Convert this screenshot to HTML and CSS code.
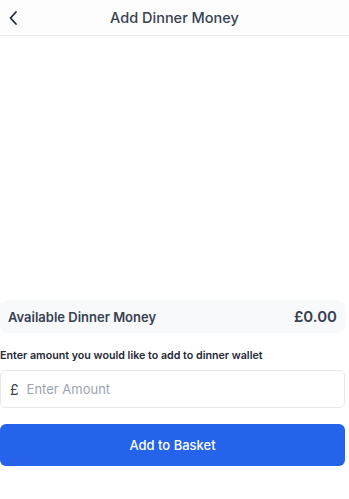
FILE: index.html
```html
<!DOCTYPE html>
<html>
<head>
<meta charset="utf-8">
<link rel="stylesheet" href="styles.css">
</head>
<body>
<div class="page">
  <header class="topbar">
    <button class="back" aria-label="Back">
      <svg width="10" height="16" viewBox="0 0 10 16"><path d="M8 2 L2.5 8 L8 14" fill="none" stroke="#1f2937" stroke-width="1.8" stroke-linecap="round" stroke-linejoin="round"/></svg>
    </button>
    <h1 class="title">Add Dinner Money</h1>
  </header>
  <main class="content">
    <div class="spacer"></div>
    <div class="balance">
      <span class="balance-label">Available Dinner Money</span>
      <span class="balance-value">£0.00</span>
    </div>
    <label class="field-label" for="amt">Enter amount you would like to add to dinner wallet</label>
    <div class="input-wrap">
      <span class="currency">£</span>
      <input id="amt" class="amount" type="text" placeholder="Enter Amount">
    </div>
    <button class="submit">Add to Basket</button>
  </main>
</div>
</body>
</html>
```
FILE: styles.css
```css
* { box-sizing: border-box; }
html, body { margin: 0; padding: 0; background: #ffffff; }
body { font-family: Inter, "Noto Sans", sans-serif; color: #374151; }
.page { width: 349px; height: 499px; }
.topbar {
  height: 36px;
  border-bottom: 1px solid #eceef1;
  background: #fdfdfd;
  display: flex;
  align-items: center;
  justify-content: center;
  position: relative;
}
.back {
  position: absolute;
  left: 6px; top: 9px;
  border: 0; background: none; padding: 0;
  width: 14px; height: 18px;
  display: flex; align-items: center; justify-content: center;
}
.title {
  margin: 0;
  font-size: 14.5px;
  font-weight: 500;
  color: #374151;
}
.content {
  width: 345px;
  display: flex;
  flex-direction: column;
}
.spacer { height: 264px; }
.balance {
  height: 33px;
  background: #f8f9fb;
  border-radius: 8px;
  display: flex;
  align-items: center;
  justify-content: space-between;
  padding: 0 8px 0 8px;
}
.balance-label { font-size: 13px; font-weight: 600; color: #374151; }
.balance-value { font-size: 15px; font-weight: 600; color: #374151; }
.field-label {
  margin-top: 16px;
  font-size: 10.7px;
  font-weight: 600;
  color: #1f2937;
  line-height: 14px;
}
.input-wrap {
  margin-top: 7px;
  height: 38px;
  border: 1px solid #e5e7eb;
  border-radius: 6px;
  display: flex;
  align-items: center;
  padding-left: 9px;
  gap: 8px;
}
.currency { font-size: 14px; color: #374151; }
.amount {
  border: 0; outline: none; flex: 1;
  font-family: Inter, "Noto Sans", sans-serif;
  font-size: 13px;
  color: #374151;
  background: transparent;
  padding: 0;
}
.amount::placeholder { color: #9ca3af; }
.submit {
  margin-top: 16px;
  height: 42px;
  border: 0;
  border-radius: 6px;
  background: #2563eb;
  color: #ffffff;
  font-family: Inter, "Noto Sans", sans-serif;
  font-size: 13px;
  font-weight: 500;
}
```
